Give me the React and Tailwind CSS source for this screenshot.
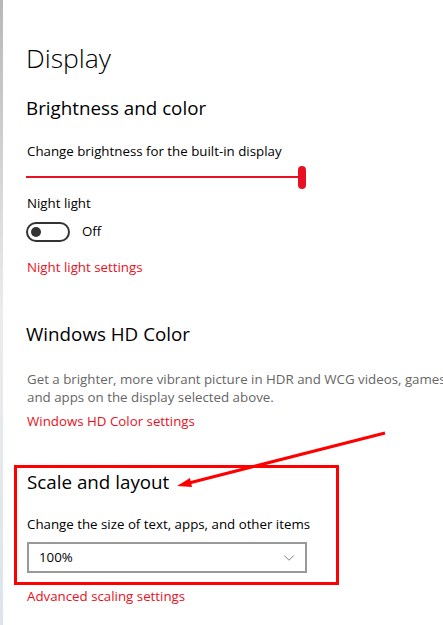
import { ChevronDown } from 'lucide-react';

const font = { fontFamily: '"Open Sans", "Noto Sans", sans-serif' };

const Toggle = () => (
  <div className="w-[44px] h-[20px] rounded-full border-2 border-[#333] flex items-center pl-[3px]">
    <div className="w-[10px] h-[10px] rounded-full bg-[#333]" />
  </div>
);

const Slider = () => (
  <div className="relative w-[280px] h-[24px] flex items-center">
    <div className="h-[2px] w-[275px] bg-[#e81123]" />
    <div className="w-[8px] h-[23px] rounded-full bg-[#e81123] -ml-[3px]" />
  </div>
);

const Dropdown = () => (
  <div className="w-[280px] h-[31px] border-2 border-[#999] flex items-center justify-between pl-[10px] pr-[7px]">
    <span className="text-[13.3px] text-black">100%</span>
    <ChevronDown size={18} strokeWidth={1} className="text-[#555]" />
  </div>
);

export default function App() {
  return (
    <div className="relative w-[443px] h-[625px] overflow-hidden bg-white flex" style={font}>
      <div className="w-[3px] shrink-0 bg-gradient-to-b from-[#b8b8b8] via-[#ececec] to-[#dde4ec]" />
      <div className="flex-1 pl-[23px] flex flex-col">
        <h1 className="mt-[40px] text-[26.5px] leading-[36px] font-light text-black">Display</h1>

        <h2 className="mt-[18px] text-[18.8px] leading-[28px] text-black">Brightness and color</h2>
        <p className="mt-[19px] text-[13.3px] leading-[20px] text-black pl-[1px]">
          Change brightness for the built-in display
        </p>
        <div className="mt-[4px]">
          <Slider />
        </div>

        <p className="mt-[4px] text-[13.3px] leading-[20px] text-black pl-[1px]">Night light</p>
        <div className="mt-[9px] flex items-center gap-[12px]">
          <Toggle />
          <span className="text-[13.3px] text-black">Off</span>
        </div>
        <a className="mt-[15px] text-[13.3px] leading-[20px] text-[#e81123] pl-[1px]">Night light settings</a>

        <h2 className="mt-[43px] text-[18.8px] leading-[28px] text-black">Windows HD Color</h2>
        <p className="mt-[22px] text-[13.3px] leading-[18px] text-[#666] whitespace-nowrap pl-[1px]">
          Get a brighter, more vibrant picture in HDR and WCG videos, games,
          <br />
          and apps on the display selected above.
        </p>
        <a className="mt-[5px] text-[13.3px] leading-[20px] text-[#e81123] pl-[1px]">Windows HD Color settings</a>

        <section className="mt-[34px] -ml-[12px] w-[325px] border-[3px] border-[#ff0000] pl-[10px] pb-[9px]">
          <h2 className="text-[18.8px] leading-[28px] text-black">Scale and layout</h2>
          <p className="mt-[18px] text-[13.3px] leading-[20px] text-black">
            Change the size of text, apps, and other items
          </p>
          <div className="mt-[8px]">
            <Dropdown />
          </div>
        </section>
        <a className="mt-[1px] text-[13.3px] leading-[20px] text-[#e81123] pl-[1px]">Advanced scaling settings</a>
      </div>

      <svg className="absolute inset-0 pointer-events-none" width="443" height="625">
        <line x1="385" y1="433" x2="189" y2="483" stroke="#ff0000" strokeWidth="3" />
        <polygon points="177,486 192,487 190,478" fill="#ff0000" />
      </svg>
    </div>
  );
}
